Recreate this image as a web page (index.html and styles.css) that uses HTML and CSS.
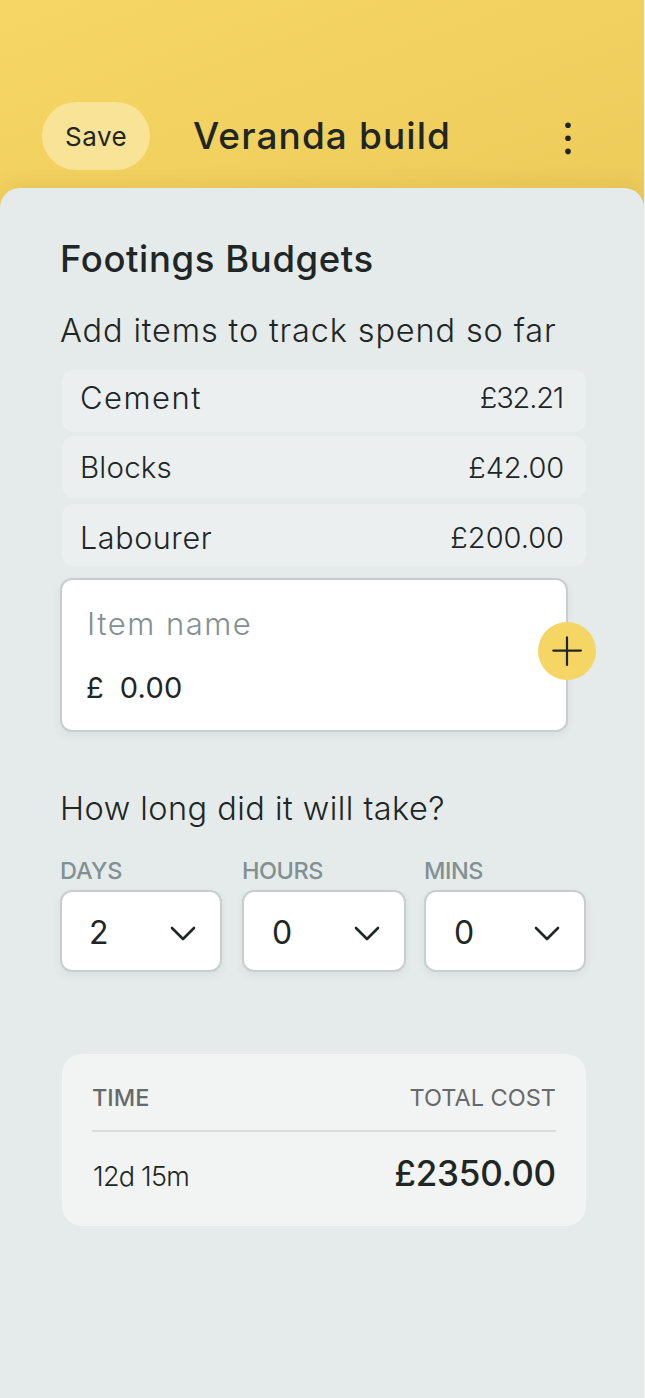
FILE: index.html
```html
<!DOCTYPE html>
<html lang="en">
<head>
<meta charset="utf-8">
<title>Veranda build</title>
<link rel="stylesheet" href="styles.css">
</head>
<body>
<div class="screen">
  <header class="header">
    <button class="save">Save</button>
    <h1 class="title">Veranda build</h1>
    <button class="menu" aria-label="More">
      <svg width="8" height="34" viewBox="0 0 8 34" fill="#202625"><circle cx="4" cy="4.2" r="2.8"/><circle cx="4" cy="17.2" r="2.8"/><circle cx="4" cy="30.4" r="2.8"/></svg>
    </button>
  </header>
  <main class="sheet">
    <h2 class="heading">Footings Budgets</h2>
    <p class="lead lead-items">Add items to track spend so far</p>
    <ul class="items">
      <li class="item item-first"><span class="cement">Cement</span><span class="price-tight">£32.21</span></li>
      <li class="item"><span class="blocks">Blocks</span><span class="price">£42.00</span></li>
      <li class="item item-last"><span class="labourer">Labourer</span><span>£200.00</span></li>
    </ul>
    <div class="entry">
      <div class="entry-name">Item name</div>
      <div class="entry-cost"><span class="currency">£</span><span class="amount">0.00</span></div>
      <button class="add" aria-label="Add item">
        <svg width="30" height="30" viewBox="0 0 30 30" stroke="#202625" stroke-width="2.2" stroke-linecap="round"><path d="M15 1.3v27.6M1.3 14.6h27.6"/></svg>
      </button>
    </div>
    <p class="lead lead-time">How long did it will take?</p>
    <div class="durations">
      <div class="field">
        <span class="label days">DAYS</span>
        <div class="select"><span>2</span><svg class="chevron" width="26" height="16" viewBox="0 0 26 16"><path d="M2 2l11 11L24 2"/></svg></div>
      </div>
      <div class="field">
        <span class="label">HOURS</span>
        <div class="select"><span class="zero">0</span><svg class="chevron" width="26" height="16" viewBox="0 0 26 16"><path d="M2 2l11 11L24 2"/></svg></div>
      </div>
      <div class="field">
        <span class="label">MINS</span>
        <div class="select"><span class="zero">0</span><svg class="chevron" width="26" height="16" viewBox="0 0 26 16"><path d="M2 2l11 11L24 2"/></svg></div>
      </div>
    </div>
    <section class="summary">
      <div class="summary-head"><span class="sum-time">TIME</span><span class="sum-cost">TOTAL COST</span></div>
      <div class="summary-body"><span class="time">12d 15m</span><span class="total">£2350.00</span></div>
    </section>
  </main>
</div>
</body>
</html>
```
FILE: styles.css
```css
* { box-sizing: border-box; }

body {
  margin: 0;
  background: #f3f5f5;
  color: #202625;
  font-family: Inter, "Liberation Sans", sans-serif;
}

h1, h2, p, ul { margin: 0; padding: 0; font-weight: inherit; }
button { border: 0; padding: 0; font: inherit; color: inherit; background: none; }
span, h1, h2, p { white-space: nowrap; }
svg { display: block; }

.screen {
  width: 644px;
  height: 1398px;
  display: flex;
  flex-direction: column;
  overflow: hidden;
  background: linear-gradient(160deg, #f6d664 0, #edcc5a 400px, #edcc5a 100%);
}

.header {
  height: 188px;
  flex: none;
  display: flex;
  align-items: flex-start;
  padding: 102px 72px 0 42px;
}

.save {
  width: 108px;
  height: 68px;
  border-radius: 34px;
  background: #f8e397;
  font-size: 26px;
  letter-spacing: .5px;
  line-height: 68px;
  text-align: left;
  padding: 1px 0 0 23px;
}

.title {
  margin-left: 43px;
  font-size: 37px;
  font-weight: 500;
  letter-spacing: 1.1px;
  line-height: 67px;
}

.menu { margin: 19px 0 0 auto; }

.sheet {
  flex: 1;
  padding: 48px 58px 0 60px;
  border-radius: 20px 20px 0 0;
  background: #e5ebea;
  box-shadow: 0 -4px 20px rgba(120, 90, 20, .1);
}

.heading { font-size: 36.5px; font-weight: 500; letter-spacing: .6px; line-height: 47px; }

.lead { font-size: 32.5px; font-weight: 300; line-height: 40px; }
.lead-items { margin-top: 28px; letter-spacing: .85px; }

.items { list-style: none; margin: 19px 0 0 2px; }

.item {
  height: 62px;
  margin-bottom: 4px;
  padding: 0 22px 0 18px;
  display: flex;
  justify-content: space-between;
  border-radius: 12px;
  background: #ebeff0;
  font-size: 29px;
  font-weight: 300;
  line-height: 63px;
}
.item-first { line-height: 55px; }
.item-last { margin: 6px 0 0; line-height: 67px; }
.cement { font-size: 31px; letter-spacing: 1.5px; }
.blocks { font-size: 29.5px; letter-spacing: .2px; }
.labourer { font-size: 30.5px; letter-spacing: .6px; }
.price { letter-spacing: -.2px; }
.price-tight { letter-spacing: -1.2px; margin-right: 1px; }

.entry {
  position: relative;
  width: 508px;
  height: 154px;
  margin-top: 12px;
  padding: 23px 24px 0;
  border: 2px solid #c8cecf;
  border-radius: 12px;
  background: #fff;
  box-shadow: 0 4px 10px rgba(40, 60, 60, .06);
  font-size: 29px;
}
.entry-name { padding-left: 1px; color: #829092; font-size: 31px; font-weight: 300; letter-spacing: 1.5px; line-height: 41px; }
.entry-cost { display: flex; gap: 16px; margin-top: 23px; line-height: 41px; }
.amount { letter-spacing: .3px; }

.add {
  position: absolute;
  top: 42px;
  left: 476px;
  width: 58px;
  height: 58px;
  display: grid;
  place-items: center;
  border-radius: 50%;
  background: #f5d563;
}

.lead-time { margin-top: 57px; letter-spacing: .46px; }

.durations {
  display: grid;
  grid-template-columns: 162px 164px 162px;
  column-gap: 20px;
  margin-top: 26px;
}
.field:last-child { margin-left: -2px; width: 162px; }
.label {
  display: block;
  padding-top: 1px;
  color: #829092;
  font-size: 23.5px;
  font-weight: 500;
  letter-spacing: -.45px;
  line-height: 30px;
}
.days { letter-spacing: 0; }
.select {
  height: 82px;
  margin-top: 4px;
  padding: 4px 24px 0 27px;
  display: flex;
  align-items: center;
  justify-content: space-between;
  border: 2px solid #c8cecf;
  border-radius: 12px;
  background: #fff;
  box-shadow: 0 4px 10px rgba(40, 60, 60, .06);
  font-size: 32px;
  line-height: 74px;
}
.zero { padding-left: 1px; }
.chevron {
  fill: none;
  stroke: #202625;
  stroke-width: 2.6;
  stroke-linecap: round;
  stroke-linejoin: round;
  margin-top: 2px;
}

.summary {
  width: 524px;
  height: 172px;
  margin: 82px 0 0 2px;
  padding: 29px 30px 0;
  border-radius: 20px;
  background: #f1f4f3;
}
.summary-head {
  height: 49px;
  display: flex;
  justify-content: space-between;
  border-bottom: 2px solid #d8dcdb;
  color: #666a6a;
  font-size: 23.5px;
  line-height: 29px;
}
.sum-time { font-weight: 500; }
.summary-body { display: flex; justify-content: space-between; }
.time { padding-left: 1px; font-size: 27px; font-weight: 300; letter-spacing: -.75px; line-height: 89px; }
.total { font-size: 35px; font-weight: 500; letter-spacing: -.2px; line-height: 83px; }
```
